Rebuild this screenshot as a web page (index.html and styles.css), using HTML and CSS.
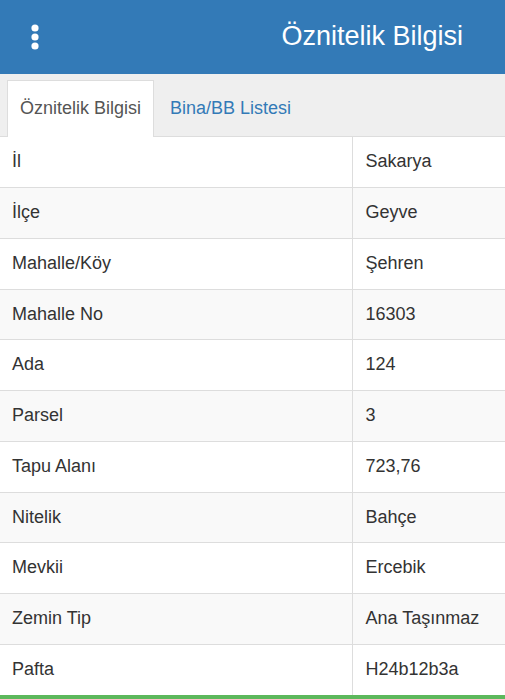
FILE: index.html
```html
<!DOCTYPE html>
<html lang="tr">
<head>
<meta charset="utf-8">
<title>Öznitelik Bilgisi</title>
<link rel="stylesheet" href="styles.css">
</head>
<body>
<header class="topbar">
  <svg class="menu-icon" width="14" height="28" viewBox="0 0 14 28" aria-hidden="true">
    <circle cx="7" cy="5" r="3.6" fill="#fff"/>
    <circle cx="7" cy="14" r="3.6" fill="#fff"/>
    <circle cx="7" cy="23" r="3.6" fill="#fff"/>
  </svg>
  <h1 class="title">Öznitelik Bilgisi</h1>
</header>
<nav class="tabs">
  <a class="tab active">Öznitelik Bilgisi</a>
  <a class="tab">Bina/BB Listesi</a>
</nav>
<table class="attr-table">
  <tbody>
    <tr><td>İl</td><td>Sakarya</td></tr>
    <tr><td>İlçe</td><td>Geyve</td></tr>
    <tr><td>Mahalle/Köy</td><td>Şehren</td></tr>
    <tr><td>Mahalle No</td><td>16303</td></tr>
    <tr><td>Ada</td><td>124</td></tr>
    <tr><td>Parsel</td><td>3</td></tr>
    <tr><td>Tapu Alanı</td><td>723,76</td></tr>
    <tr><td>Nitelik</td><td>Bahçe</td></tr>
    <tr><td>Mevkii</td><td>Ercebik</td></tr>
    <tr><td>Zemin Tip</td><td>Ana Taşınmaz</td></tr>
    <tr><td>Pafta</td><td>H24b12b3a</td></tr>
  </tbody>
</table>
<div class="footer-bar"></div>
</body>
</html>
```
FILE: styles.css
```css
* { box-sizing: border-box; }
html, body { margin: 0; padding: 0; }
body {
  font-family: "Liberation Sans", Arial, sans-serif;
  color: #333;
  background: #fff;
  width: 505px;
  overflow: hidden;
}
.topbar {
  height: 74px;
  background: #337ab7;
  display: flex;
  align-items: center;
  justify-content: space-between;
  padding: 0 42px 0 28px;
}
.menu-icon { display: block; margin-top: -1px; }
.title {
  margin: 0;
  color: #fff;
  font-weight: normal;
  font-size: 27px;
  line-height: 1;
  margin-top: -1px;
}
.tabs {
  height: 63px;
  background: #efefef;
  border-bottom: 1px solid #ddd;
  display: flex;
  align-items: flex-end;
  padding-left: 7px;
}
.tab {
  height: 57px;
  margin-bottom: -1px;
  display: flex;
  align-items: center;
  padding: 0 12px;
  font-size: 18px;
  color: #337ab7;
  border: 1px solid transparent;
  border-bottom: none;
  padding-bottom: 1px;
}
.tab + .tab { margin-left: 3px; }
.tab.active {
  background: #fff;
  color: #555;
  border-color: #ddd;
}
.attr-table {
  width: 100%;
  border-collapse: collapse;
  font-size: 18px;
}
.attr-table tr { height: 50.73px; }
.attr-table td {
  padding: 0 12px;
  line-height: 25.7px;
  border-bottom: 1px solid #ddd;
  vertical-align: middle;
}
.attr-table td:first-child { width: 352px; border-right: 1px solid #ddd; }
.attr-table td:last-child { padding-left: 13px; }
.attr-table tr:nth-child(even) td { background: #f9f9f9; }
.attr-table tr:last-child td { border-bottom: none; }
.footer-bar {
  height: 6px;
  background: #5cb85c;
}
```
